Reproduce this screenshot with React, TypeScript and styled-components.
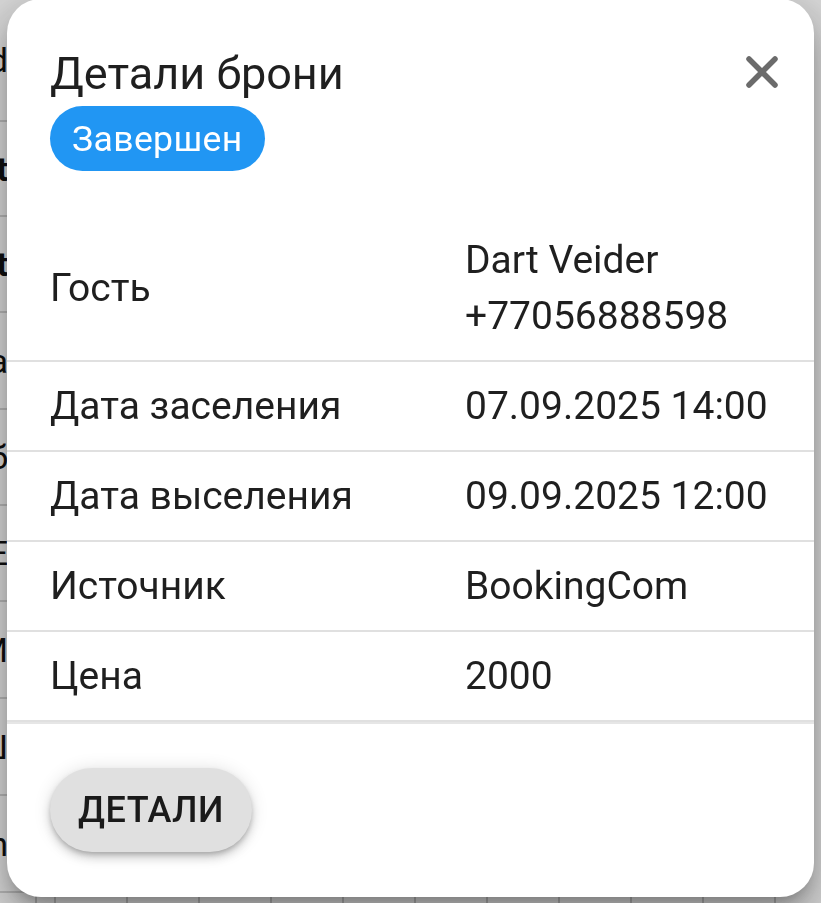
import React from 'react'
import styled, { createGlobalStyle } from 'styled-components'

const GlobalStyle = createGlobalStyle`
  html, body {
    margin: 0;
    padding: 0;
    background: #ffffff;
    font-family: Roboto, 'Noto Sans', sans-serif;
  }
`

interface BookingRow {
  label: string
  values: string[]
}

const rows: BookingRow[] = [
  { label: 'Гость', values: ['Dart Veider', '+77056888598'] },
  { label: 'Дата заселения', values: ['07.09.2025 14:00'] },
  { label: 'Дата выселения', values: ['09.09.2025 12:00'] },
  { label: 'Источник', values: ['BookingCom'] },
  { label: 'Цена', values: ['2000'] },
]

const backgroundRows = [
  { text: 'Grid', bold: false, height: 122 },
  { text: 'Unit', bold: true, height: 95 },
  { text: 'Unit', bold: true, height: 96 },
  { text: 'Ба', bold: false, height: 97 },
  { text: 'Об', bold: false, height: 96 },
  { text: 'ОЕ', bold: false, height: 96 },
  { text: 'М', bold: false, height: 97 },
  { text: 'Ш', bold: false, height: 97 },
  { text: 'Sun', bold: false, height: 97 },
]

const CloseIcon = () => (
  <svg width="34" height="34" viewBox="0 0 34 34">
    <path
      d="M4 4 L30 30 M30 4 L4 30"
      stroke="#6b6b6b"
      strokeWidth="5.5"
      strokeLinecap="round"
    />
  </svg>
)

export default function App() {
  return (
    <>
      <GlobalStyle />
      <Calendar>
        <NameColumn>
          {backgroundRows.map((row, i) => (
            <NameCell key={i} $height={row.height}>
              <NameText $bold={row.bold}>{row.text}</NameText>
            </NameCell>
          ))}
        </NameColumn>
        <DayGrid>
          {Array.from({ length: 12 }).map((_, i) => (
            <DayColumn key={i} $narrow={i === 0} />
          ))}
        </DayGrid>
      </Calendar>

      <Backdrop />

      <Dialog role="dialog">
        <Header>
          <HeaderText>
            <Title>Детали брони</Title>
            <StatusChip>Завершен</StatusChip>
          </HeaderText>
          <CloseButton aria-label="close">
            <CloseIcon />
          </CloseButton>
        </Header>

        <DetailsTable>
          <tbody>
            {rows.map((row) => (
              <tr key={row.label}>
                <LabelCell>{row.label}</LabelCell>
                <ValueCell>
                  {row.values.map((v) => (
                    <div key={v}>{v}</div>
                  ))}
                </ValueCell>
              </tr>
            ))}
          </tbody>
        </DetailsTable>

        <Footer>
          <DetailsButton>Детали</DetailsButton>
        </Footer>
      </Dialog>
    </>
  )
}

const Calendar = styled.div`
  display: flex;
  height: 903px;
  overflow: hidden;
  background: #ffffff;
`

const NameColumn = styled.div`
  display: flex;
  flex-direction: column;
  width: 35px;
  flex-shrink: 0;
`

const NameCell = styled.div<{ $height: number }>`
  display: flex;
  justify-content: flex-end;
  align-items: center;
  height: ${({ $height }) => $height}px;
  box-sizing: border-box;
  border-bottom: 2px solid #d6d6d6;
  padding-right: 27px;
  overflow: hidden;
`

const NameText = styled.span<{ $bold: boolean }>`
  font-size: 34px;
  font-weight: ${({ $bold }) => ($bold ? 700 : 400)};
  color: #111;
  white-space: nowrap;
`

const DayGrid = styled.div`
  display: flex;
  flex: 1;
`

const DayColumn = styled.div<{ $narrow: boolean }>`
  width: ${({ $narrow }) => ($narrow ? 17 : 70)}px;
  flex-shrink: 0;
  border-left: 2px solid #cfcfcf;
`

const Backdrop = styled.div`
  position: fixed;
  inset: 0;
  background: rgba(0, 0, 0, 0.16);
`

const Dialog = styled.div`
  position: fixed;
  left: 7px;
  top: -1px;
  width: 807px;
  height: 898px;
  box-sizing: border-box;
  background: #ffffff;
  border-radius: 34px;
  box-shadow: 0 11px 15px -7px rgba(0, 0, 0, 0.25),
    0 24px 38px 3px rgba(0, 0, 0, 0.18), 0 9px 46px 8px rgba(0, 0, 0, 0.14);
  display: flex;
  flex-direction: column;
  color: #1f1f1f;
  overflow: hidden;
`

const Header = styled.div`
  display: flex;
  justify-content: space-between;
  align-items: flex-start;
  padding: 48px 22px 0 43px;
`

const HeaderText = styled.div`
  display: flex;
  flex-direction: column;
  align-items: flex-start;
  gap: 6px;
`

const Title = styled.h2`
  margin: 0;
  font-size: 45px;
  font-weight: 400;
  line-height: 53px;
  color: #1f1f1f;
`

const StatusChip = styled.span`
  display: inline-flex;
  align-items: center;
  height: 65px;
  padding: 0 22px;
  border-radius: 33px;
  background: #2196f3;
  color: #ffffff;
  font-size: 35.5px;
  letter-spacing: 0.4px;
`

const CloseButton = styled.button`
  display: flex;
  align-items: center;
  justify-content: center;
  width: 60px;
  height: 60px;
  margin-top: -5px;
  padding: 0;
  border: none;
  background: transparent;
  cursor: pointer;
`

const DetailsTable = styled.table`
  width: 100%;
  margin-top: 45px;
  border-collapse: collapse;

  tr {
    border-bottom: 2px solid #e0e0e0;
  }
`

const LabelCell = styled.td`
  width: 415px;
  padding: 16px 0 16px 43px;
  font-size: 39px;
  line-height: 56px;
  vertical-align: middle;
`

const ValueCell = styled.td`
  padding: 16px 0;
  font-size: 39px;
  line-height: 56px;
  vertical-align: middle;
`

const Footer = styled.div`
  display: flex;
  padding: 44px 43px 0;
  border-top: 2px solid #e6e6e6;
`

const DetailsButton = styled.button`
  height: 84px;
  padding: 0 28px;
  border: none;
  border-radius: 42px;
  background: #e0e0e0;
  box-shadow: 0 3px 5px -1px rgba(0, 0, 0, 0.2), 0 6px 10px 0 rgba(0, 0, 0, 0.14),
    0 1px 18px 0 rgba(0, 0, 0, 0.12);
  font-family: Roboto, 'Noto Sans', sans-serif;
  font-size: 36px;
  font-weight: 500;
  letter-spacing: 0.5px;
  text-transform: uppercase;
  color: #1a1a1a;
`
